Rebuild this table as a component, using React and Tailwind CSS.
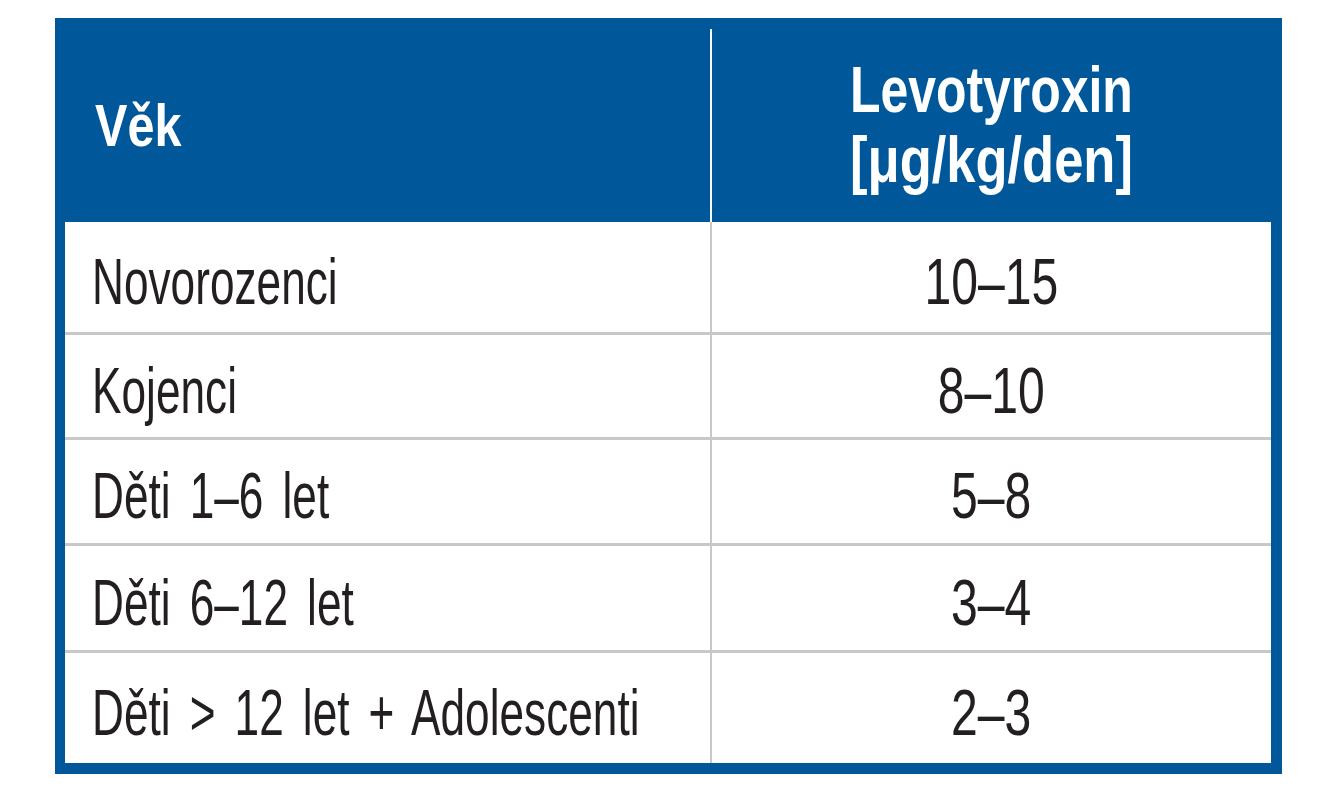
const rows = [
  { age: "Novorozenci", dose: "10–15", h: "h-[113px]" },
  { age: "Kojenci", dose: "8–10", h: "h-[105px]" },
  { age: "Děti 1–6 let", dose: "5–8", h: "h-[106px]" },
  { age: "Děti 6–12 let", dose: "3–4", h: "h-[107px]" },
  { age: "Děti > 12 let + Adolescenti", dose: "2–3", h: "h-[110px]" },
];

const font = { fontFamily: '"Liberation Sans Narrow", "Liberation Sans", sans-serif' };

export default function App() {
  return (
    <div className="min-h-screen w-full bg-white pt-[18px] pl-[55px]" style={font}>
      <div className="w-[1227px] border-[#00589a] border-t-[11px] border-l-[10px] border-r-[11px] border-b-[11px] bg-white">
        {/* header */}
        <div className="grid grid-cols-[645px_2px_559px] h-[193px] bg-[#00589a] text-white font-bold">
          <div className="flex items-center pl-[30px]">
            <span className="inline-block origin-left scale-x-[0.81] text-[60px] leading-none">Věk</span>
          </div>
          <div className="bg-white" />
          <div className="flex flex-col items-center justify-center pb-[2px]">
            <span className="inline-block scale-x-[0.78] text-[64px] leading-[70px]">Levotyroxin</span>
            <span className="inline-block scale-x-[0.82] text-[64px] leading-[70px]">[μg/kg/den]</span>
          </div>
        </div>

        {/* body */}
        {rows.map((r, i) => (
          <div
            key={r.age}
            className={`grid grid-cols-[645px_2px_559px] ${r.h} ${i < rows.length - 1 ? "border-b-[3px] border-[#c8c8c8]" : ""} text-[#231f20]`}
          >
            <div className="flex items-center pl-[27px] pt-[8px]">
              <span className="inline-block origin-left scale-x-[0.68] text-[65px] leading-none whitespace-nowrap [word-spacing:10px]">
                {r.age}
              </span>
            </div>
            <div className="bg-[#c8c8c8]" />
            <div className="flex items-center justify-center pt-[8px]">
              <span className="inline-block scale-x-[0.74] text-[65px] leading-none">{r.dose}</span>
            </div>
          </div>
        ))}
      </div>
    </div>
  );
}
